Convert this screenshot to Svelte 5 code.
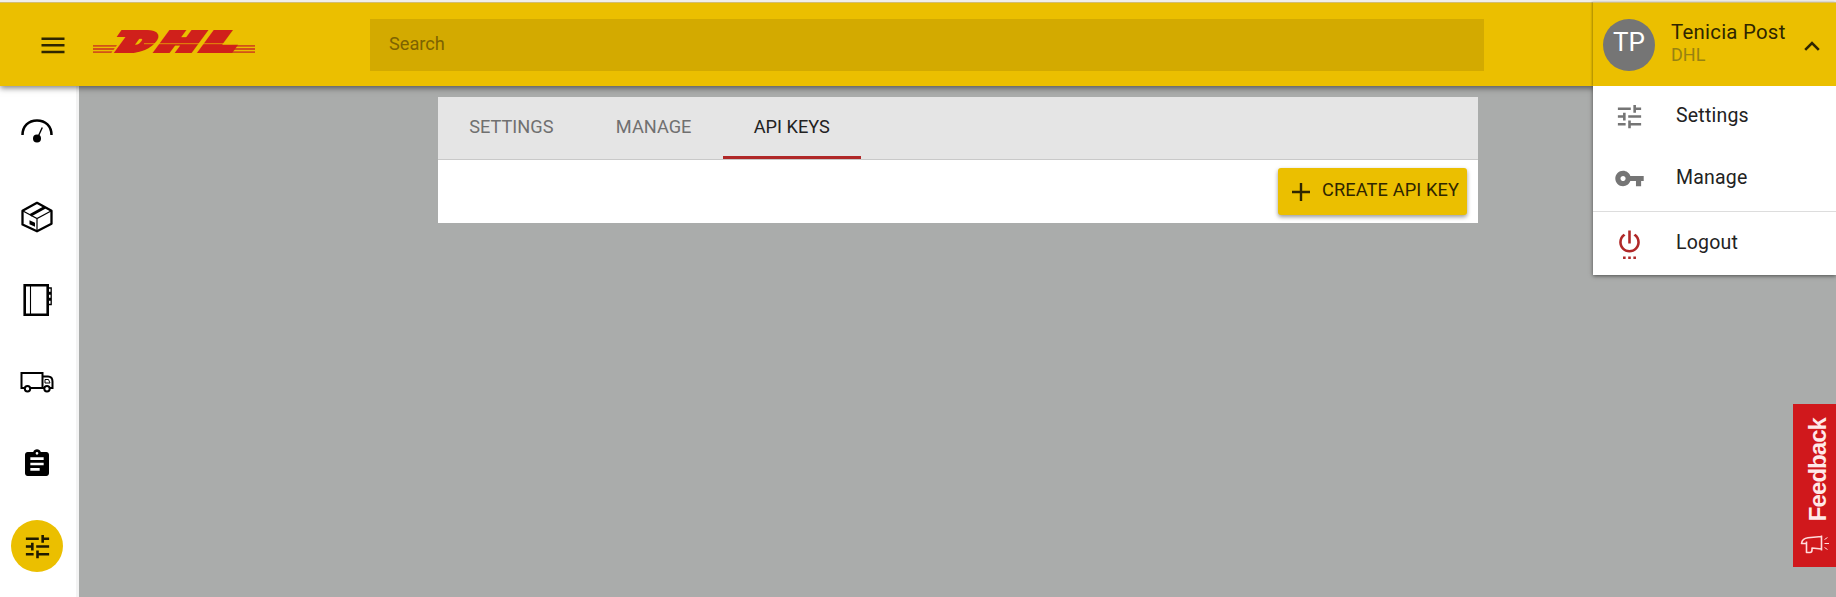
<script>
  const tabs = ['SETTINGS', 'MANAGE', 'API KEYS'];
  const active = 'API KEYS';
  const tune = 'M3 17v2h6v-2H3zM3 5v2h10V5H3zm10 16v-2h8v-2h-8v-2h-2v6h2zM7 9v2H3v2h4v2h2V9H7zm14 4v-2H11v2h10zm-6-4h2V7h4V5h-4V3h-2v6z';
  const key = 'M12.65 10C11.83 7.67 9.61 6 7 6c-3.31 0-6 2.69-6 6s2.69 6 6 6c2.61 0 4.83-1.67 5.65-4H17v4h4v-4h2v-4H12.65zM7 14c-1.1 0-2-.9-2-2s.9-2 2-2 2 .9 2 2-.9 2-2 2z';
  const power = 'M7 24h2v-2H7v2zm4 0h2v-2h-2v2zm2-22h-2v10h2V2zm3.56 2.44l-1.45 1.45C16.84 6.94 18 8.83 18 11c0 3.31-2.69 6-6 6s-6-2.69-6-6c0-2.17 1.16-4.06 2.88-5.12L7.44 4.44C5.36 5.88 4 8.28 4 11c0 4.42 3.58 8 8 8s8-3.58 8-8c0-2.72-1.36-5.12-3.44-6.56zM15 24h2v-2h-2v2z';
</script>

<div class="app">
  <header>
    <button class="burger" aria-label="Menu">
      <svg width="24" height="18" viewBox="0 0 24 18"><path d="M0.5 1.7h23M0.5 8.3h23M0.5 15h23" stroke="#2f2600" stroke-width="2.5" /></svg>
    </button>
    <svg class="logo" width="163" height="46" viewBox="0 -10 163 46">
      <g fill="#d25218">
        <path d="M0 16h24l-1.200 1.800H0zM0 19.100h21.800l-1.200 1.800H0zM0 22.200h19.500l-1.200 1.800H0z" />
        <path d="M142.500 16H162v1.800h-20.800zM140.300 19.100H162v1.800h-23zM138 22.200h24v1.800h-25.300z" />
      </g>
      <path d="M28.500 1.100h18v6.900H23.600z" fill="#d0201b" />
      <g class="mark">
        <text transform="matrix(1.640 0 -0.735 1 23.500 22)">D</text>
        <text transform="matrix(1.850 0 -0.735 1 62.500 22)">H</text>
        <text transform="matrix(2.100 0 -0.735 1 107 22)">L</text>
      </g>
      <path d="M51 14.700h88" stroke="#ebbf00" stroke-width="0.7" />
    </svg>
    <div class="search">Search</div>
    <div class="user">
      <div class="avatar">TP</div>
      <div class="who"><span class="name">Tenicia Post</span><span class="org">DHL</span></div>
      <svg class="chev" width="16" height="10" viewBox="0 0 16 10"><path d="M1.200 8.800L8 2l6.800 6.800" fill="none" stroke="#2f2600" stroke-width="2.600" /></svg>
    </div>
  </header>

  <div class="body">
    <nav>
      <a class="dash" href="#dash" aria-label="Dashboard">
        <svg width="32" height="26" viewBox="0 0 32 26"><path d="M1.500 17C1.500 8 7.500 2.500 16 2.500S30.500 8 30.500 17" fill="none" stroke="#000" stroke-width="2.500" /><circle cx="16" cy="20.500" r="4" /><path d="M16.500 20L21.300 9.500" stroke="#000" stroke-width="1.400" /></svg>
      </a>
      <a href="#ship" aria-label="Shipments">
        <svg width="32" height="32" viewBox="0 0 32 32" fill="none" stroke="#000"><path d="M16 1.800L30.500 9.800v13L16 30.300 1.500 23.500V9.800z" stroke-width="2.300" stroke-linejoin="round" /><path d="M1.500 9.800L16 17.500l14.500-7.700M16 17.500v13" stroke-width="1.200" /><path d="M9.500 14.200L24 6.300" stroke-width="3" /><path d="M8.500 19.200l5.500 2.600v4l-5.500-2.600z" fill="#000" stroke="none" /></svg>
      </a>
      <a href="#book" aria-label="Address book">
        <svg width="30" height="34" viewBox="0 0 30 34" fill="none" stroke="#000"><path d="M2.700 2.300h23v29.400h-23z" stroke-width="2.600" /><path d="M8.500 3v28" stroke-width="1.100" /><path d="M26 5h3.200v4.500H26zM26 11h3.200v4.500H26zM26 17h3.200v4.500H26z" stroke-width="1.300" /></svg>
      </a>
      <a href="#pickup" aria-label="Pickups">
        <svg width="34" height="22" viewBox="0 0 34 22" fill="none" stroke="#000" stroke-width="2"><path d="M5 17H1.500V2h21v15H10M22.500 5.500h5.500c3 0 4.500 2 4.500 5V17H30M22.500 17h2" /><path d="M25 8.500h3.500l1.500 3.500h-5z" stroke-width="1" /><circle cx="7.500" cy="17.800" r="2.700" /><circle cx="27" cy="17.800" r="2.700" /></svg>
      </a>
      <a href="#orders" aria-label="Reports">
        <svg width="32" height="32" viewBox="0 0 24 24"><path d="M19 3h-4.180C14.400 1.840 13.300 1 12 1s-2.400.84-2.820 2H5c-1.100 0-2 .9-2 2v14c0 1.100.9 2 2 2h14c1.100 0 2-.9 2-2V5c0-1.100-.9-2-2-2zm-7 0c.55 0 1 .45 1 1s-.45 1-1 1-1-.45-1-1 .45-1 1-1zm2 14H7v-2h7v2zm3-4H7v-2h10v2zm0-4H7V7h10v2z" /></svg>
      </a>
      <a class="current" href="#settings" aria-label="Settings">
        <svg width="31" height="31" viewBox="0 0 24 24"><path d={tune} fill="#1f1a00" /></svg>
      </a>
    </nav>

    <main>
      <section class="card">
        <div class="tabs">
          {#each tabs as tab}
            <div class="tab" class:active={tab === active}>{tab}</div>
          {/each}
        </div>
        <div class="actions">
          <button class="create">
            <svg width="18" height="18" viewBox="0 0 18 18"><path d="M9 0v18M0 9h18" stroke="#2f2600" stroke-width="2.400" /></svg>
            <span>CREATE API KEY</span>
          </button>
        </div>
      </section>
    </main>
  </div>

  <div class="menu">
    <div class="item"><svg width="31" height="31" viewBox="0 0 24 24"><path d={tune} /></svg><span>Settings</span></div>
    <div class="item"><svg width="31" height="31" viewBox="0 0 24 24"><path d={key} /></svg><span>Manage</span></div>
    <div class="item last"><svg class="red" width="31" height="31" viewBox="0 0 24 24"><path d={power} /></svg><span>Logout</span></div>
  </div>

  <div class="feedback">
    <svg width="30" height="20" viewBox="0 0 30 20" fill="none" stroke="#ffdcdc" stroke-width="1.600" stroke-linejoin="round"><path d="M21.500 1.500V16.500M21.500 2.500L8 3.800C4 4.200 2 6 1.500 9.500h5v9h3.500c1.500 0 2-1 2-2.500v-2L21.500 15M6.500 10V7.500" /><path d="M24.500 5.500l3-2M24.500 9.500h4.500M24.500 13.500l3 2" stroke-width="1" /></svg>
    <span>Feedback</span>
  </div>
</div>

<style>
  :global(body) { margin: 0; background: #aaacab; }
  * { box-sizing: border-box; }
  .app { position: relative; width: 1836px; height: 597px; overflow: hidden; display: flex; flex-direction: column; font-family: Roboto, "Liberation Sans", sans-serif; background: #aaacab; }
  button { border: 0; padding: 0; background: none; font: inherit; }
  svg { display: block; flex: none; }
  header { position: relative; z-index: 3; flex: none; height: 86px; border-top: 2px solid #f0eee9; background: #ebbf00; box-shadow: inset 0 1px #d3bd72, 0 2px 6px rgba(0, 0, 0, 0.5); display: flex; align-items: center; padding-top: 2px; }
  .burger { margin: 2px 0 0 41px; }
  .logo { margin: -6px 0 0 28px; overflow: visible; }
  .mark { font: 900 26px Inter, sans-serif; fill: #d0201b; stroke: #d0201b; stroke-width: 4px; }
  .search { margin-left: 114px; width: 1114px; height: 52px; background: #d3aa00; color: #7d6300; font-size: 18.200px; line-height: 50px; padding-left: 19px; }
  .user { flex: 1; height: 84px; margin-top: -2px; margin-left: 109px; display: flex; align-items: center; padding: 2px 0 0 10px; box-shadow: -1px 0 2px rgba(0, 0, 0, 0.3), inset 0 1px #d3bd72; }
  .avatar { width: 52px; height: 52px; border-radius: 50%; background: #757575; color: #fff; font-size: 26px; line-height: 47px; text-align: center; }
  .who { display: flex; flex-direction: column; width: 133px; margin: -5px 0 0 16px; white-space: nowrap; }
  .name { font-size: 20.400px; line-height: 24px; letter-spacing: 0.250px; color: #2f2600; }
  .org { font-size: 18px; line-height: 22px; color: #978212; }
  .chev { margin: 1px 0 0 0; }
  .body { flex: 1; display: flex; }
  nav { width: 79px; flex: none; border-right: 3px solid #f3f3f3; background: #fff; padding: 19px 0 0 11px; display: flex; flex-direction: column; gap: 30.250px; }
  nav a { width: 52px; height: 52px; flex: none; display: flex; align-items: center; justify-content: center; border-radius: 50%; }
  .dash { margin-bottom: 4px; }
  .current { background: #ebbf00; }
  main { flex: 1; padding: 11px 0 0 359px; }
  .card { width: 1040px; background: #fff; }
  .tabs { display: flex; height: 63px; background: #e5e5e5; border-bottom: 1px solid #c9c9c9; }
  .tab { padding: 0 31.200px; font-size: 18.200px; line-height: 59px; color: #707070; height: 62px; }
  .active { color: #222; border-bottom: 3px solid #b02828; }
  .actions { height: 63px; display: flex; justify-content: flex-end; padding: 8px 11px 0 0; }
  .create { width: 189px; height: 47px; border-radius: 3px; background: #ebbf00; color: #2f2600; display: flex; align-items: center; gap: 12px; padding-left: 14px; font-size: 18.200px; letter-spacing: 0.120px; box-shadow: 0 2px 4px rgba(0, 0, 0, 0.4); white-space: nowrap; }
  .create span { margin-top: -4px; }
  .menu { position: absolute; z-index: 4; left: 1593px; top: 86px; width: 243px; height: 189px; background: #fff; box-shadow: 0 1px 4px rgba(0, 0, 0, 0.55); clip-path: inset(0 0 -7px -6px); }
  .item { height: 62px; display: flex; align-items: center; gap: 31px; padding: 0 0 2px 21px; font-size: 19.500px; letter-spacing: 0.200px; color: #222; }
  .item svg { fill: #757575; }
  .item .red { fill: #b02828; }
  .item span { margin-top: -2px; }
  .item.last { margin-top: 1px; height: 64px; padding-bottom: 0; border-top: 1px solid #ddd; }
  .feedback { position: absolute; left: 1793px; top: 404px; width: 43px; height: 163px; background: #d0181c; display: flex; flex-direction: column-reverse; align-items: center; padding-bottom: 13px; gap: 13px; }
  .feedback span { writing-mode: vertical-rl; transform: rotate(180deg); font: bold 24px/26px "Liberation Sans", sans-serif; letter-spacing: -0.950px; color: #ffe9e9; margin-left: 6px; }
</style>
